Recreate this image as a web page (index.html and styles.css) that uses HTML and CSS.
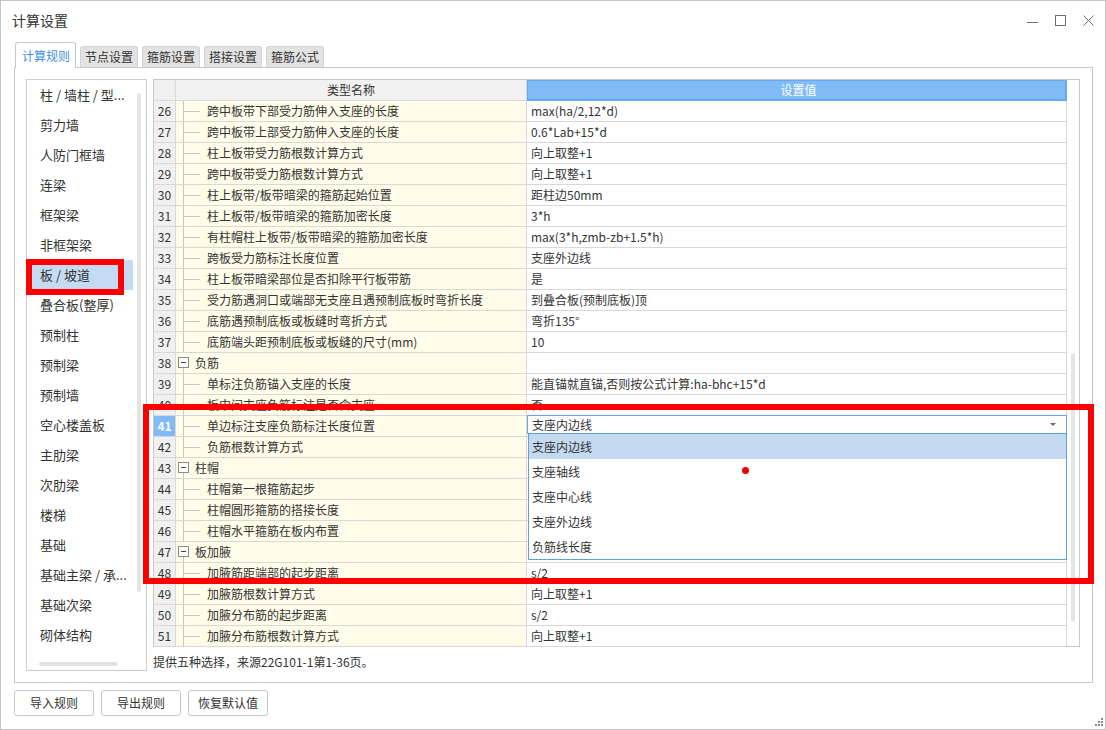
FILE: index.html
```html
<!DOCTYPE html>
<html>
<head>
<meta charset="utf-8">
<link rel="stylesheet" href="styles.css">
</head>
<body>
<div class="window">
  <div class="titlebar">
    <span class="title">计算设置</span>
    <div class="winctl">
      <svg class="ctl" width="11" height="11" viewBox="0 0 11 11"><line x1="0" y1="7.5" x2="11" y2="7.5"/></svg>
      <svg class="ctl" width="11" height="11" viewBox="0 0 11 11"><rect x="0.5" y="0.5" width="10" height="10" fill="none"/></svg>
      <svg class="ctl" width="11" height="11" viewBox="0 0 11 11"><line x1="0.5" y1="0.5" x2="10.5" y2="10.5"/><line x1="10.5" y1="0.5" x2="0.5" y2="10.5"/></svg>
    </div>
  </div>
  <div class="tabs">
    <div class="tab active">计算规则</div>
    <div class="tab">节点设置</div>
    <div class="tab">箍筋设置</div>
    <div class="tab">搭接设置</div>
    <div class="tab">箍筋公式</div>
  </div>
  <div class="panel">
    <div class="list">
      <div class="list-main">
        <div class="items">
          <div class="item">柱 / 墙柱 / 型...</div>
          <div class="item">剪力墙</div>
          <div class="item">人防门框墙</div>
          <div class="item">连梁</div>
          <div class="item">框架梁</div>
          <div class="item">非框架梁</div>
          <div class="item sel">板 / 坡道</div>
          <div class="item">叠合板(整厚)</div>
          <div class="item">预制柱</div>
          <div class="item">预制梁</div>
          <div class="item">预制墙</div>
          <div class="item">空心楼盖板</div>
          <div class="item">主肋梁</div>
          <div class="item">次肋梁</div>
          <div class="item">楼梯</div>
          <div class="item">基础</div>
          <div class="item">基础主梁 / 承...</div>
          <div class="item">基础次梁</div>
          <div class="item">砌体结构</div>
        </div>
        <div class="vtrack"><div class="vthumb"></div></div>
      </div>
      <div class="htrack"><div class="hthumb"></div></div>
    </div>
    <div class="right">
      <div class="grid">
        <div class="table">
          <div class="row head"><div class="c num"></div><div class="c name">类型名称</div><div class="c val">设置值</div></div>
          <div class="row"><div class="c num">26</div><div class="c name leaf">跨中板带下部受力筋伸入支座的长度</div><div class="c val">max(ha/2,12*d)</div></div>
          <div class="row"><div class="c num">27</div><div class="c name leaf">跨中板带上部受力筋伸入支座的长度</div><div class="c val">0.6*Lab+15*d</div></div>
          <div class="row"><div class="c num">28</div><div class="c name leaf">柱上板带受力筋根数计算方式</div><div class="c val">向上取整+1</div></div>
          <div class="row"><div class="c num">29</div><div class="c name leaf">跨中板带受力筋根数计算方式</div><div class="c val">向上取整+1</div></div>
          <div class="row"><div class="c num">30</div><div class="c name leaf">柱上板带/板带暗梁的箍筋起始位置</div><div class="c val">距柱边50mm</div></div>
          <div class="row"><div class="c num">31</div><div class="c name leaf">柱上板带/板带暗梁的箍筋加密长度</div><div class="c val">3*h</div></div>
          <div class="row"><div class="c num">32</div><div class="c name leaf">有柱帽柱上板带/板带暗梁的箍筋加密长度</div><div class="c val">max(3*h,zmb-zb+1.5*h)</div></div>
          <div class="row"><div class="c num">33</div><div class="c name leaf">跨板受力筋标注长度位置</div><div class="c val">支座外边线</div></div>
          <div class="row"><div class="c num">34</div><div class="c name leaf">柱上板带暗梁部位是否扣除平行板带筋</div><div class="c val">是</div></div>
          <div class="row"><div class="c num">35</div><div class="c name leaf">受力筋遇洞口或端部无支座且遇预制底板时弯折长度</div><div class="c val">到叠合板(预制底板)顶</div></div>
          <div class="row"><div class="c num">36</div><div class="c name leaf">底筋遇预制底板或板缝时弯折方式</div><div class="c val">弯折135°</div></div>
          <div class="row"><div class="c num">37</div><div class="c name leaf">底筋端头距预制底板或板缝的尺寸(mm)</div><div class="c val">10</div></div>
          <div class="row"><div class="c num">38</div><div class="c name group"><span class="tog"></span>负筋</div><div class="c val"></div></div>
          <div class="row"><div class="c num">39</div><div class="c name leaf">单标注负筋锚入支座的长度</div><div class="c val">能直锚就直锚,否则按公式计算:ha-bhc+15*d</div></div>
          <div class="row"><div class="c num">40</div><div class="c name leaf">板中间支座负筋标注是否含支座</div><div class="c val">否</div></div>
          <div class="row"><div class="c num cur">41</div><div class="c name leaf">单边标注支座负筋标注长度位置</div><div class="c val edit">
            <div class="combo">支座内边线<span class="arrow"></span></div>
            <div class="dropdown">
              <div class="opt sel">支座内边线</div>
              <div class="opt">支座轴线</div>
              <div class="opt">支座中心线</div>
              <div class="opt">支座外边线</div>
              <div class="opt">负筋线长度</div>
            </div>
          </div></div>
          <div class="row"><div class="c num">42</div><div class="c name leaf">负筋根数计算方式</div><div class="c val"></div></div>
          <div class="row"><div class="c num">43</div><div class="c name group"><span class="tog"></span>柱帽</div><div class="c val"></div></div>
          <div class="row"><div class="c num">44</div><div class="c name leaf">柱帽第一根箍筋起步</div><div class="c val"></div></div>
          <div class="row"><div class="c num">45</div><div class="c name leaf">柱帽圆形箍筋的搭接长度</div><div class="c val"></div></div>
          <div class="row"><div class="c num">46</div><div class="c name leaf">柱帽水平箍筋在板内布置</div><div class="c val"></div></div>
          <div class="row"><div class="c num">47</div><div class="c name group"><span class="tog"></span>板加腋</div><div class="c val"></div></div>
          <div class="row"><div class="c num">48</div><div class="c name leaf">加腋筋距端部的起步距离</div><div class="c val">s/2</div></div>
          <div class="row"><div class="c num">49</div><div class="c name leaf">加腋筋根数计算方式</div><div class="c val">向上取整+1</div></div>
          <div class="row"><div class="c num">50</div><div class="c name leaf">加腋分布筋的起步距离</div><div class="c val">s/2</div></div>
          <div class="row"><div class="c num">51</div><div class="c name leaf">加腋分布筋根数计算方式</div><div class="c val">向上取整+1</div></div>
        </div>
        <div class="gscroll"><div class="gthumb"></div></div>
      </div>
      <div class="hint">提供五种选择，来源22G101-1第1-36页。</div>
    </div>
  </div>
  <div class="buttons">
    <div class="btn">导入规则</div>
    <div class="btn">导出规则</div>
    <div class="btn">恢复默认值</div>
  </div>
  <svg class="grip" width="8" height="8" viewBox="0 0 8 8">
    <rect x="6" y="0" width="2" height="2"/>
    <rect x="3" y="3" width="2" height="2"/><rect x="6" y="3" width="2" height="2"/>
    <rect x="0" y="6" width="2" height="2"/><rect x="3" y="6" width="2" height="2"/><rect x="6" y="6" width="2" height="2"/>
  </svg>
</div>
<div class="mark mark-list"></div>
<div class="mark mark-table"></div>
<div class="dot"></div>
</body>
</html>
```
FILE: styles.css
```css
html, body {
  margin: 0;
  padding: 0;
  background: #fff;
}
body {
  width: 1106px;
  height: 730px;
  position: relative;
  overflow: hidden;
  font-family: "Microsoft YaHei", "Noto Sans CJK SC", sans-serif;
  color: #333;
  font-size: 12px;
}
.window {
  position: relative;
  width: 1106px;
  height: 730px;
  box-sizing: border-box;
  border: 1px solid #c4c4c4;
  background: #fff;
}
.titlebar {
  height: 41px;
  box-sizing: border-box;
  padding: 0 11px 3px 11px;
  display: flex;
  align-items: center;
  justify-content: space-between;
}
.title {
  font-size: 14px;
  line-height: 20px;
  color: #333;
}
.winctl {
  display: flex;
  gap: 17px;
  padding-top: 1px;
}
.ctl {
  display: block;
  stroke: #6e6e6e;
  stroke-width: 1;
}
.tabs {
  height: 25px;
  margin: 0 12px 0 13px;
  padding-left: 1px;
  display: flex;
  align-items: flex-end;
}
.tab {
  height: 21px;
  box-sizing: border-box;
  padding: 0 4px;
  margin-left: 4px;
  background: #e2e2e2;
  border: 1px solid #d2d2d2;
  border-bottom: none;
  border-radius: 3px 3px 0 0;
  line-height: 20px;
  font-size: 12px;
  color: #333;
}
.tab.active {
  margin-left: 0;
  height: 26px;
  margin-bottom: -1px;
  padding: 0 5px 0 6px;
  line-height: 25px;
  background: #fff;
  color: #3c8ee0;
  border-color: #c8c8c8;
  position: relative;
  z-index: 1;
}
.panel {
  margin: 0 12px 0 13px;
  height: 616px;
  box-sizing: border-box;
  border: 1px solid #c8c8c8;
  padding: 11px 12px 11px 11px;
  display: flex;
  gap: 6px;
}
.list {
  width: 121px;
  height: 592px;
  box-sizing: border-box;
  border: 1px solid #cdcdcd;
  display: flex;
  flex-direction: column;
}
.list-main {
  flex: 1;
  display: flex;
  min-height: 0;
}
.items {
  width: 106px;
  padding-left: 3px;
  box-sizing: border-box;
}
.item {
  height: 30px;
  line-height: 30px;
  padding-left: 10px;
  font-size: 13px;
  white-space: nowrap;
  color: #333;
}
.item.sel {
  background: #c5dbf1;
}
.vtrack {
  width: 12px;
}
.vthumb {
  margin: 13px 0 0 4px;
  width: 4px;
  height: 499px;
  border-radius: 2px;
  background: #e4e4e4;
}
.htrack {
  height: 12px;
}
.hthumb {
  margin: 4px 0 0 12px;
  width: 79px;
  height: 4px;
  border-radius: 2px;
  background: #e4e4e4;
}
.right {
  width: 927px;
  display: flex;
  flex-direction: column;
}
.grid {
  height: 568px;
  box-sizing: border-box;
  border: 1px solid #c8c8c8;
  display: flex;
}
.table {
  width: 913px;
}
.gscroll {
  width: 12px;
}
.gthumb {
  margin: 273px 0 0 4px;
  width: 4px;
  height: 269px;
  border-radius: 2px;
  background: #e4e4e4;
}
.row {
  display: flex;
  height: 21px;
}
.c {
  box-sizing: border-box;
  height: 21px;
  border-right: 1px solid #d8d8d8;
  border-bottom: 1px solid #d8d8d8;
  font-size: 12px;
  line-height: 20px;
  white-space: nowrap;
  overflow: hidden;
}
.num {
  width: 22px;
  text-align: center;
  background: #f0f0f0;
  font-size: 12px;
  color: #333;
}
.num.cur {
  background: #80bbf7;
  color: #fff;
  font-weight: bold;
}
.name {
  width: 351px;
  background: #fffcea;
  position: relative;
}
.val {
  width: 540px;
  padding-left: 4px;
  background: #fff;
}
.head .name {
  background: #f1f1f1;
  text-align: center;
}
.head .val {
  background: #80bbf7;
  color: #fff;
  text-align: center;
  box-shadow: inset 0 0 0 1px #68a8ee;
  border-color: #68a8ee;
}
.leaf {
  padding-left: 31px;
}
.leaf::before {
  content: "";
  position: absolute;
  left: 7px;
  top: 0;
  bottom: -1px;
  border-left: 1px solid #c6c6c6;
}
.leaf::after {
  content: "";
  position: absolute;
  left: 8px;
  top: 10px;
  width: 16px;
  border-top: 1px solid #c6c6c6;
}
.group {
  padding-left: 19px;
}
.group::before {
  content: "";
  position: absolute;
  left: 7px;
  top: 15px;
  bottom: -1px;
  border-left: 1px solid #c6c6c6;
}
.tog {
  position: absolute;
  left: 2px;
  top: 4px;
  width: 11px;
  height: 11px;
  box-sizing: border-box;
  border: 1px solid #8c8c8c;
  background: #fff;
  z-index: 1;
}
.tog::after {
  content: "";
  position: absolute;
  left: 2px;
  top: 4px;
  width: 5px;
  height: 1px;
  background: #444;
}
.edit {
  position: relative;
  overflow: visible;
  padding: 0;
}
.combo {
  position: absolute;
  left: 0;
  top: -1px;
  width: 540px;
  height: 19px;
  box-sizing: border-box;
  border: 1px solid #6aa6e2;
  background: #fff;
  padding-left: 4px;
  line-height: 17px;
  font-size: 12px;
  z-index: 4;
}
.arrow {
  position: absolute;
  right: 10px;
  top: 7px;
  width: 0;
  height: 0;
  border-left: 3px solid transparent;
  border-right: 3px solid transparent;
  border-top: 3px solid #666;
}
.dropdown {
  position: absolute;
  left: 1px;
  top: 17px;
  width: 539px;
  height: 127px;
  box-sizing: border-box;
  border: 1px solid #5ea2d8;
  background: #fff;
  z-index: 5;
}
.opt {
  height: 25px;
  line-height: 25px;
  padding-left: 3px;
  font-size: 12px;
  color: #333;
}
.opt.sel {
  background: #c4daf1;
}
.hint {
  height: 30px;
  line-height: 30px;
  font-size: 12px;
  color: #333;
}
.buttons {
  display: flex;
  gap: 7px;
  margin: 7px 0 0 13px;
}
.btn {
  width: 80px;
  height: 26px;
  box-sizing: border-box;
  border: 1px solid #c8c8c8;
  border-radius: 3px;
  background: #fff;
  text-align: center;
  line-height: 24px;
  font-size: 12px;
  color: #333;
}
.grip {
  position: absolute;
  right: 2px;
  bottom: 3px;
  fill: #8a8a8a;
}
.mark {
  position: absolute;
  box-sizing: border-box;
  border: 6px solid #ff0000;
  z-index: 10;
}
.mark-list {
  left: 26px;
  top: 259px;
  width: 98px;
  height: 36px;
}
.mark-table {
  left: 143px;
  top: 404px;
  width: 951px;
  height: 180px;
}
.dot {
  position: absolute;
  left: 742px;
  top: 467px;
  width: 7px;
  height: 7px;
  border-radius: 50%;
  background: #ee0000;
  z-index: 10;
}
```
